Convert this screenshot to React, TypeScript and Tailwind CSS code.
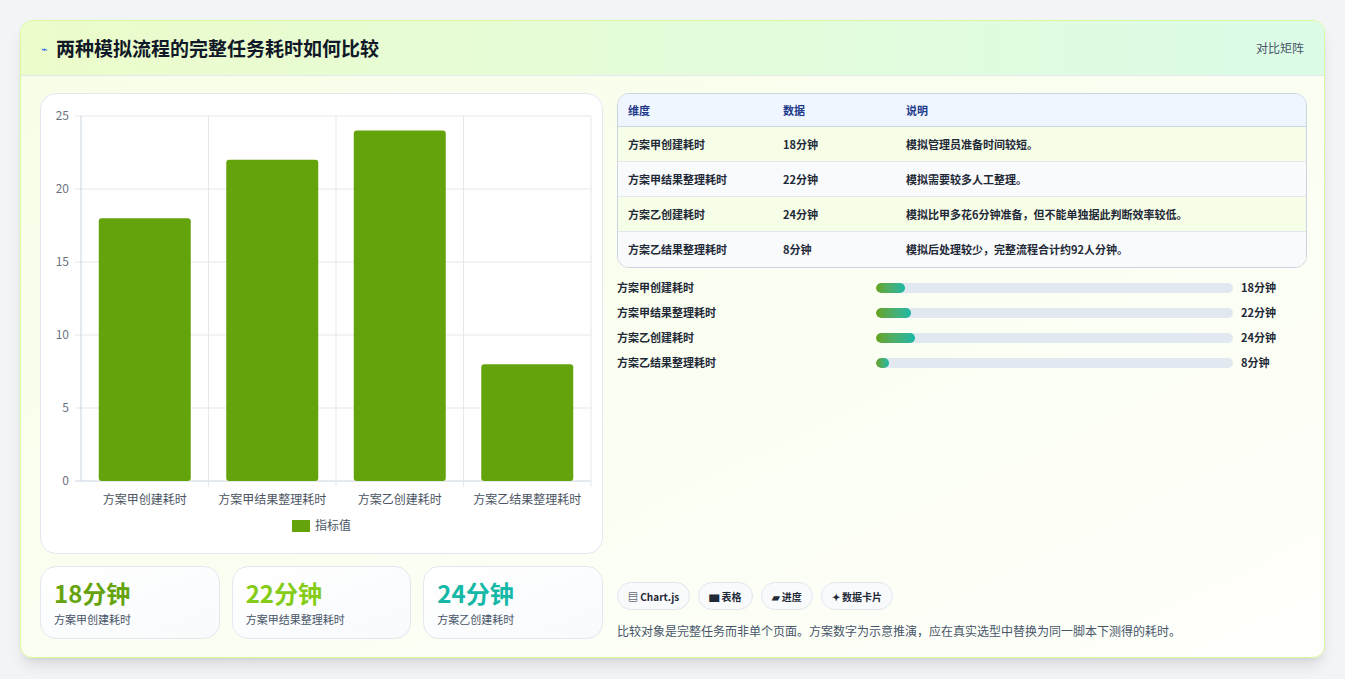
const rows = [
  { name: '方案甲创建耗时', val: 18, note: '模拟管理员准备时间较短。', pct: 8.2 },
  { name: '方案甲结果整理耗时', val: 22, note: '模拟需要较多人工整理。', pct: 9.9 },
  { name: '方案乙创建耗时', val: 24, note: '模拟比甲多花6分钟准备，但不能单独据此判断效率较低。', pct: 10.9 },
  { name: '方案乙结果整理耗时', val: 8, note: '模拟后处理较少，完整流程合计约92人分钟。', pct: 3.6 },
];

const font = { fontFamily: '"Noto Sans CJK SC", "Noto Sans", sans-serif' };

function Chart() {
  const x0 = 40, x1 = 550, y0 = 22, y1 = 387;
  const h = y1 - y0;
  const cw = (x1 - x0) / 4;
  return (
    <svg width="562" height="460" viewBox="0 0 562 460">
      {[0, 5, 10, 15, 20, 25].map((t) => {
        const y = y1 - (t / 25) * h;
        return (
          <g key={t}>
            <line x1={x0 - 6} x2={x1} y1={y} y2={y} stroke={t === 0 ? '#cbd5e1' : '#e5e7eb'} />
            <text x={x0 - 12} y={y + 4} textAnchor="end" fontSize="12" fill="#6b7280" style={font}>{t}</text>
          </g>
        );
      })}
      {[0, 1, 2, 3, 4].map((i) => (
        <line key={i} x1={x0 + i * cw} x2={x0 + i * cw} y1={y0} y2={y1 + (i === 0 ? 0 : 6)} stroke={i === 0 ? '#cbd5e1' : '#e5e7eb'} />
      ))}
      {rows.map((r, i) => {
        const bh = (r.val / 25) * h;
        const cx = x0 + cw * i + cw / 2;
        return (
          <g key={r.name}>
            <rect x={cx - 46} y={y1 - bh} width="92" height={bh} rx="3" fill="#65a30d" />
            <text x={cx} y={y1 + 23} textAnchor="middle" fontSize="12" fill="#4b5563" style={font}>{r.name}</text>
          </g>
        );
      })}
      <rect x="251" y="426" width="18" height="12" fill="#65a30d" />
      <text x="274" y="436" fontSize="12" fill="#4b5563" style={font}>指标值</text>
    </svg>
  );
}

export default function App() {
  return (
    <div className="w-[1345px] h-[679px] bg-[#f3f4f6] pt-[20px] px-[20px]" style={font}>
      <div className="h-[638px] rounded-xl border border-[#d9f99d] bg-gradient-to-br from-[#f7fee7] to-[#fefffb] shadow-lg overflow-hidden flex flex-col">
        <div className="h-[55px] shrink-0 flex items-center justify-between px-5 bg-gradient-to-r from-[#ecfccb] to-[#dcfce7] border-b border-[#e2e8f0]">
          <div className="flex items-center gap-2">
            <span className="text-[11px] text-[#2563eb]">⌁</span>
            <h1 className="text-[19px] font-bold text-[#111827]">两种模拟流程的完整任务耗时如何比较</h1>
          </div>
          <span className="text-[12px] text-[#475569]">对比矩阵</span>
        </div>
        <div className="flex-1 flex gap-[14px] pl-[19px] pr-[17px] pt-[17px]">
          <div className="w-[563px] flex flex-col gap-[12px]">
            <div className="h-[461px] rounded-2xl border border-[#e2e8f0] bg-white overflow-hidden">
              <Chart />
            </div>
            <div className="grid grid-cols-3 gap-[12px]">
              {[
                ['18分钟', '方案甲创建耗时', 'text-[#65a30d]'],
                ['22分钟', '方案甲结果整理耗时', 'text-[#84cc16]'],
                ['24分钟', '方案乙创建耗时', 'text-[#14b8a6]'],
              ].map(([v, l, c]) => (
                <div key={l} className="h-[73px] rounded-2xl border border-[#e2e8f0] bg-gradient-to-br from-white to-[#f8fafc] px-[13px] pt-[9px]">
                  <div className={`text-[24px] font-bold leading-[34px] ${c}`}>{v}</div>
                  <div className="text-[11px] text-[#475569] mt-[1px]">{l}</div>
                </div>
              ))}
            </div>
          </div>
          <div className="flex-1 flex flex-col">
            <div className="rounded-xl border border-[#cbd5e1] overflow-hidden text-[11px] font-bold text-[#1f2937]">
              <div className="flex h-[33px] items-center bg-[#eff6ff] text-[#1e3a8a] border-b border-[#cbd5e1]">
                <div className="w-[165px] pl-[10px]">维度</div>
                <div className="w-[123px]">数据</div>
                <div>说明</div>
              </div>
              {rows.map((r, i) => (
                <div key={r.name} className={`flex h-[35px] items-center ${i % 2 ? 'bg-[#f8fafc]' : 'bg-[#f7fee7]'} ${i < 3 ? 'border-b border-[#e2e8f0]' : ''}`}>
                  <div className="w-[165px] pl-[10px]">{r.name}</div>
                  <div className="w-[123px]">{r.val}分钟</div>
                  <div>{r.note}</div>
                </div>
              ))}
            </div>
            <div className="mt-[10px] flex flex-col gap-[6px]">
              {rows.map((r) => (
                <div key={r.name} className="flex items-center h-[19px] text-[11px] font-bold text-[#1f2937]">
                  <div className="w-[259px]">{r.name}</div>
                  <div className="w-[357px] h-[10px] rounded-full bg-[#e2e8f0] overflow-hidden">
                    <div className="h-full rounded-full bg-gradient-to-r from-[#65a30d] to-[#14b8a6]" style={{ width: `${r.pct}%` }} />
                  </div>
                  <div className="ml-[8px]">{r.val}分钟</div>
                </div>
              ))}
            </div>
            <div className="mt-auto mb-[17px]">
              <div className="flex gap-[8px]">
                {['▤ Chart.js', '▆ 表格', '▰ 进度', '✦ 数据卡片'].map((p) => (
                  <span key={p} className="h-[28px] px-[10px] flex items-center rounded-full border border-[#e2e8f0] bg-[#f8fafc] text-[10px] font-bold text-[#1f2937]">{p}</span>
                ))}
              </div>
              <p className="mt-[12px] text-[12px] text-[#475569]">比较对象是完整任务而非单个页面。方案数字为示意推演，应在真实选型中替换为同一脚本下测得的耗时。</p>
            </div>
          </div>
        </div>
      </div>
    </div>
  );
}
